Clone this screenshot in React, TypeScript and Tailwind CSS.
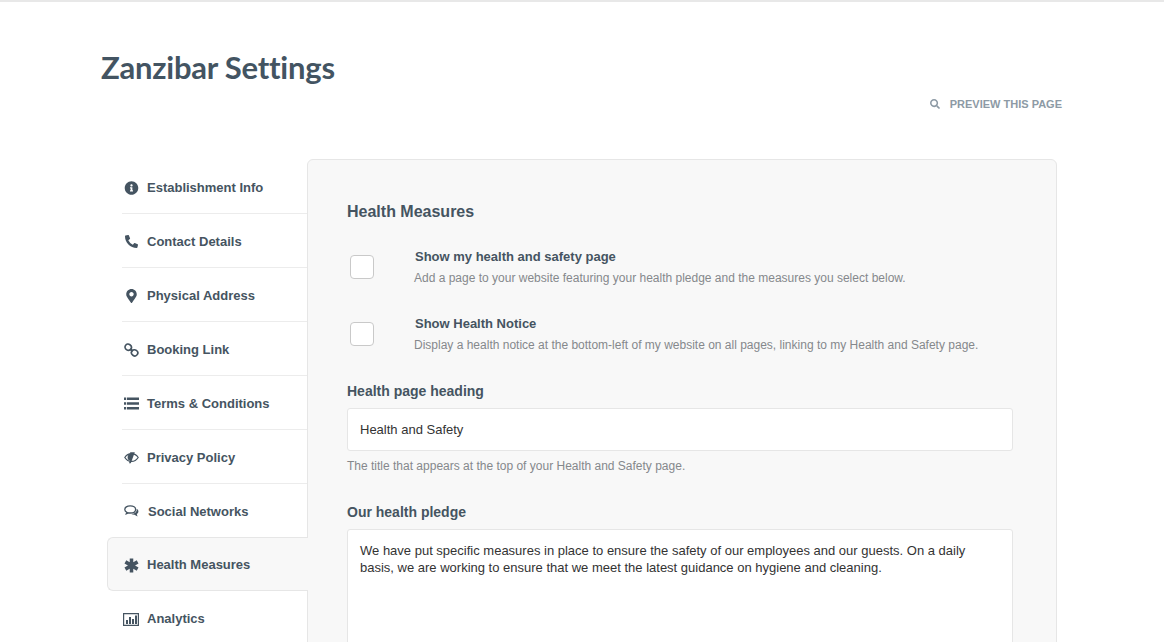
import { FaInfoCircle, FaPhoneAlt, FaMapMarkerAlt, FaSearch } from "react-icons/fa";
import type { ComponentType } from "react";

type IconProps = { className?: string };

const LinkIcon = ({ className }: IconProps) => (
  <svg viewBox="0 0 15 14" className={className} fill="none" stroke="currentColor" strokeWidth="1.7">
    <ellipse cx="4.2" cy="4.2" rx="3.2" ry="3" transform="rotate(35 4.2 4.2)" />
    <ellipse cx="10.6" cy="9.8" rx="3.2" ry="3" transform="rotate(35 10.6 9.8)" />
    <path d="M6.2 6.2l2.6 2" strokeWidth="2.2" />
  </svg>
);

const ListIcon = ({ className }: IconProps) => (
  <svg viewBox="0 0 15 13" className={className} fill="currentColor">
    <path d="M0 0.5h2.2v2.4H0zM3 0.5h12v2.4H3zM0 5.3h2.2v2.4H0zM3 5.3h12v2.4H3zM0 10.1h2.2v2.4H0zM3 10.1h12v2.4H3z" />
  </svg>
);

const EyeSlashIcon = ({ className }: IconProps) => (
  <svg viewBox="0 0 15 13" className={className}>
    <path d="M0.8 6.5C2.4 4 4.6 2.6 7.5 2.6S12.6 4 14.2 6.5C12.6 9 10.4 10.4 7.5 10.4S2.4 9 0.8 6.5z" fill="none" stroke="currentColor" strokeWidth="1.2" />
    <path d="M6 1.2h4.8L6.8 12.2H5l.9-2.4C4.4 9 3.6 7.8 3.6 6.4 3.6 4.4 5 3 6.6 2.6z" fill="currentColor" />
  </svg>
);

const CommentsIcon = ({ className }: IconProps) => (
  <svg viewBox="0 0 15 13" className={className} fill="none" stroke="currentColor">
    <path d="M6.2 0.9C3 0.9 0.8 2.4 0.8 4.4c0 1.2.8 2.2 2 2.9l-.5 1.5 2-1c.6.1 1.2.2 1.9.2 3.2 0 5.4-1.5 5.4-3.6S9.4.9 6.2.9z" strokeWidth="1.3" />
    <path d="M12.6 3.8c1.2.7 1.8 1.5 1.8 2.6 0 1-.6 1.9-1.6 2.5l.7 2.7-3-1.9c-1.2 0-2.4-.3-3.2-.8 2.6-.1 5-1.3 5.3-3.5z" fill="currentColor" stroke="none" />
  </svg>
);

const AsteriskIcon = ({ className }: IconProps) => (
  <svg viewBox="0 0 14 14" className={className} fill="none" stroke="currentColor" strokeWidth="3.3">
    <path d="M7 0.5v13M1.3 3.6l11.4 6.8M12.7 3.6L1.3 10.4" />
  </svg>
);

const ChartIcon = ({ className }: IconProps) => (
  <svg viewBox="0 0 16 13" className={className}>
    <path d="M0.6 0.6h14.8v11.8H0.6z" fill="none" stroke="currentColor" strokeWidth="1.2" />
    <path d="M3 7h2v4H3zM6 4h2v7H6zM9 6h2v5H9zM12 2.6h2V11h-2z" fill="currentColor" />
  </svg>
);

const items: { label: string; icon: ComponentType<IconProps>; size: string; labelClass?: string; active?: boolean }[] = [
  { label: "Establishment Info", icon: FaInfoCircle, size: "h-[14px] w-[15px]" },
  { label: "Contact Details", icon: FaPhoneAlt, size: "h-[13px] w-[15px]" },
  { label: "Physical Address", icon: FaMapMarkerAlt, size: "h-[14px] w-[15px]" },
  { label: "Booking Link", icon: LinkIcon, size: "h-[14px] w-[15px]" },
  { label: "Terms & Conditions", icon: ListIcon, size: "h-[13px] w-[15px]" },
  { label: "Privacy Policy", icon: EyeSlashIcon, size: "h-[13px] w-[15px]" },
  { label: "Social Networks", icon: CommentsIcon, size: "h-[13px] w-[15px]", labelClass: "ml-[9px]" },
  { label: "Health Measures", icon: AsteriskIcon, size: "h-[15px] w-[15px]", active: true },
  { label: "Analytics", icon: ChartIcon, size: "h-[13px] w-4 -ml-px" },
];

const SideItem = ({ label, icon: Icon, size, labelClass = "ml-2", active }: (typeof items)[number]) => {
  if (active) {
    return (
      <div className="relative z-10 -mr-px -mt-px flex h-[54px] items-center rounded-l-md border border-r-0 border-[#e6e6e6] bg-[#f8f8f8] pl-4 pt-[2px]">
        <Icon className={size} />
        <span className={labelClass}>{label}</span>
      </div>
    );
  }
  return (
    <div className="ml-[15px] flex h-[54px] items-center border-b border-[#ececec] pl-0.5 pt-[2px] last:border-b-0">
      <Icon className={size} />
      <span className={labelClass}>{label}</span>
    </div>
  );
};

const CheckRow = ({ title, text }: { title: string; text: string }) => (
  <div className="flex h-[67px] items-start">
    <div className="ml-[3px] mt-[9px] h-6 w-6 rounded-[4px] border border-[#c9c9c9] bg-white" />
    <div className="ml-10 pt-px">
      <div className="pl-px text-[13px] font-bold leading-5">{title}</div>
      <div className="mt-[2px] text-[12px] leading-[18px] text-[#85888c]">{text}</div>
    </div>
  </div>
);

export default function App() {
  return (
    <div className="h-[642px] overflow-hidden border-t-2 border-[#e8e8e8] bg-white font-['Liberation_Sans',Arial,sans-serif] text-[#455461]">
      <div className="flex h-[147px] justify-between pl-[101px] pr-[102px] pt-[45px]">
        <h1 className="font-['Lato',sans-serif] text-[31px] font-bold leading-10 tracking-[-0.22px] text-[#435462]">Zanzibar Settings</h1>
        <div className="mt-[51px] flex h-3 items-center text-[11px] font-bold uppercase text-[#8d9aa5]">
          <FaSearch className="mr-[10px] text-[10px]" />
          Preview this page
        </div>
      </div>
      <div className="mt-[10px] flex pl-[107px]">
        <div className="mt-px w-[200px] text-[13px] font-bold">
          {items.map((item) => (
            <SideItem key={item.label} {...item} />
          ))}
        </div>
        <div className="h-[600px] w-[750px] rounded-md border border-[#e6e6e6] bg-[#f8f8f8] px-[39px] pt-[42px]">
          <h2 className="text-[16px] font-bold leading-5">Health Measures</h2>
          <div className="mt-[24px]">
            <CheckRow title="Show my health and safety page" text="Add a page to your website featuring your health pledge and the measures you select below." />
            <CheckRow title="Show Health Notice" text="Display a health notice at the bottom-left of my website on all pages, linking to my Health and Safety page." />
          </div>
          <label className="mt-px block text-[14px] font-bold leading-5">Health page heading</label>
          <div className="mt-[7px] flex h-[43px] w-[666px] items-center rounded-[3px] border border-[#e6e6e6] bg-white px-3 text-[13px] text-[#333]">
            Health and Safety
          </div>
          <p className="mt-[6px] text-[12px] leading-[18px] text-[#85888c]">The title that appears at the top of your Health and Safety page.</p>
          <label className="mt-[27px] block text-[14px] font-bold leading-5">Our health pledge</label>
          <div className="mt-[7px] h-[200px] w-[666px] rounded-[3px] border border-[#e6e6e6] bg-white pl-3 pr-10 py-[12px] text-[13px] leading-[17px] text-[#333]">
            We have put specific measures in place to ensure the safety of our employees and our guests. On a daily basis, we are working to ensure that we meet the latest guidance on hygiene and cleaning.
          </div>
        </div>
      </div>
    </div>
  );
}
